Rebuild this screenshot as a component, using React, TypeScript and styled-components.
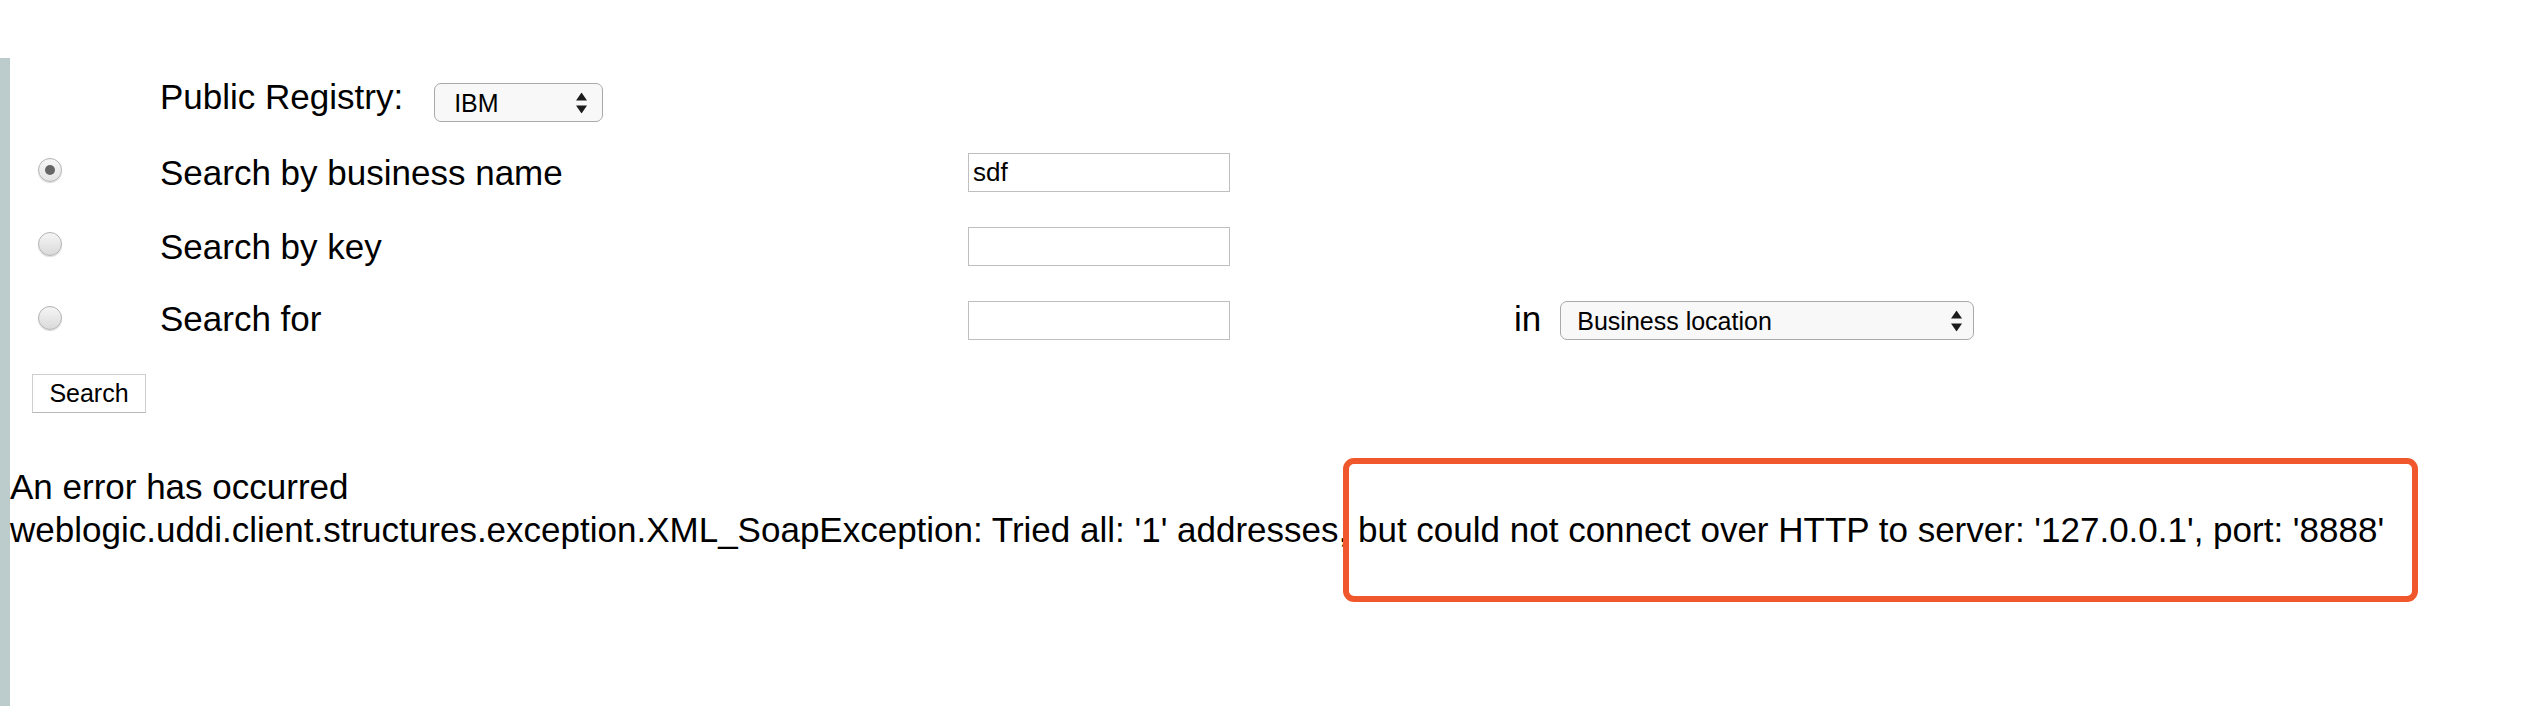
import styled, { createGlobalStyle } from 'styled-components';

const GlobalStyle = createGlobalStyle`
  html, body {
    margin: 0;
    padding: 0;
    background: #fff;
  }
  body {
    font-family: "Liberation Sans", Arial, Helvetica, sans-serif;
    color: #000;
  }
`

const Page = styled.div`
  position: relative;
  width: 2536px;
  height: 706px;
  padding-top: 58px;
  box-sizing: border-box;
  overflow: hidden;
`

const Frame = styled.div`
  height: 648px;
  border-left: 10px solid #bccbcb;
  padding-top: 25px;
  box-sizing: border-box;
  display: flex;
  flex-direction: column;
`

const Row = styled.div<{ $gap: number }>`
  display: grid;
  grid-template-columns: 150px 808px 546px auto;
  grid-template-rows: 39px;
  align-items: center;
  height: 39px;
  margin-top: ${p => p.$gap}px;
`

const RegistryCell = styled.div`
  grid-column: 2 / 4;
  display: flex;
  align-items: center;
  gap: 31px;
`

const Label = styled.span<{ $lift?: number }>`
  font-size: 35px;
  line-height: 40px;
  white-space: nowrap;
  margin-bottom: ${p => p.$lift ?? 0}px;
`

const Radio = styled.input.attrs({ type: 'radio', name: 'searchType' })`
  appearance: none;
  -webkit-appearance: none;
  margin: 0 0 5px 28px;
  width: 24px;
  height: 24px;
  border-radius: 50%;
  border: 1px solid #b3b3b3;
  background: linear-gradient(#f5f5f5, #dadada);
  box-shadow: 0 1px 1px rgba(0, 0, 0, 0.15);
  box-sizing: border-box;
  display: grid;
  place-content: center;

  &:checked {
    background: linear-gradient(#f7f7f7, #e4e4e4);
  }

  &:checked::before {
    content: "";
    width: 10px;
    height: 10px;
    border-radius: 50%;
    background: #666;
  }
`

const TextInput = styled.input`
  width: 262px;
  height: 39px;
  box-sizing: border-box;
  border: 1.5px solid #bfbfbf;
  padding: 0 4px;
  font-family: "Liberation Sans", Arial, sans-serif;
  font-size: 26px;
  color: #000;
  outline: none;
`

const InCell = styled.div`
  display: flex;
  align-items: center;
  gap: 19px;
`

const SelectWrap = styled.div<{ $width: number }>`
  position: relative;
  display: inline-block;
  width: ${p => p.$width}px;
`

const Select = styled.select<{ $pad: number }>`
  appearance: none;
  -webkit-appearance: none;
  display: block;
  width: 100%;
  height: 39px;
  box-sizing: border-box;
  border: 1.5px solid #a9a9a9;
  border-radius: 7px;
  background: #f8f8f8;
  padding: 0 0 0 ${p => p.$pad}px;
  font-family: "Liberation Sans", Arial, sans-serif;
  font-size: 25px;
  color: #000;
  outline: none;
`

const Arrows = styled.svg<{ $right: number }>`
  position: absolute;
  right: ${p => p.$right}px;
  top: 50%;
  transform: translateY(-50%);
  pointer-events: none;
`

const ButtonRow = styled.div`
  margin-top: 34px;
  padding-left: 22px;
`

const SearchButton = styled.button`
  width: 114px;
  height: 39px;
  padding: 0;
  background: #fff;
  border: 1.5px solid #cfcfcf;
  border-bottom-color: #b8b8b8;
  font-family: "Liberation Sans", Arial, sans-serif;
  font-size: 25px;
  color: #000;
`

const ErrorBlock = styled.div`
  margin-top: 52px;
  font-size: 35px;
  line-height: 43px;
  white-space: nowrap;
`

const Highlight = styled.div`
  position: absolute;
  left: 1343px;
  top: 458px;
  width: 1075px;
  height: 144px;
  box-sizing: border-box;
  border: 6px solid #f0572c;
  border-radius: 11px;
  pointer-events: none;
`

function UpDown({ right }: { right: number }) {
  return (
    <Arrows $right={right} width="11" height="21" viewBox="0 0 11 21">
      <polygon points="0,8 5.5,0 11,8" fill="#1c1c1c" />
      <polygon points="0,13 11,13 5.5,21" fill="#1c1c1c" />
    </Arrows>
  )
}

export default function App() {
  return (
    <>
      <GlobalStyle />
      <Page>
        <Frame>
          <Row $gap={0}>
            <RegistryCell>
              <Label $lift={12}>Public Registry:</Label>
              <SelectWrap $width={169}>
                <Select $pad={19} defaultValue="IBM">
                  <option>IBM</option>
                  <option>Microsoft</option>
                  <option>SAP</option>
                </Select>
                <UpDown right={16} />
              </SelectWrap>
            </RegistryCell>
          </Row>

          <Row $gap={31}>
            <Radio defaultChecked />
            <Label>Search by business name</Label>
            <TextInput defaultValue="sdf" />
          </Row>

          <Row $gap={35}>
            <Radio />
            <Label>Search by key</Label>
            <TextInput />
          </Row>

          <Row $gap={35}>
            <Radio />
            <Label $lift={4}>Search for</Label>
            <TextInput />
            <InCell>
              <Label $lift={4}>in</Label>
              <SelectWrap $width={414}>
                <Select $pad={16} defaultValue="Business location">
                  <option>Business location</option>
                  <option>Business name</option>
                  <option>Service type</option>
                </Select>
                <UpDown right={12} />
              </SelectWrap>
            </InCell>
          </Row>

          <ButtonRow>
            <SearchButton>Search</SearchButton>
          </ButtonRow>

          <ErrorBlock>
            An error has occurred
            <br />
            weblogic.uddi.client.structures.exception.XML_SoapException: Tried all: '1' addresses, but could not connect over HTTP to server: '127.0.0.1', port: '8888'
          </ErrorBlock>
        </Frame>
        <Highlight />
      </Page>
    </>
  )
}
